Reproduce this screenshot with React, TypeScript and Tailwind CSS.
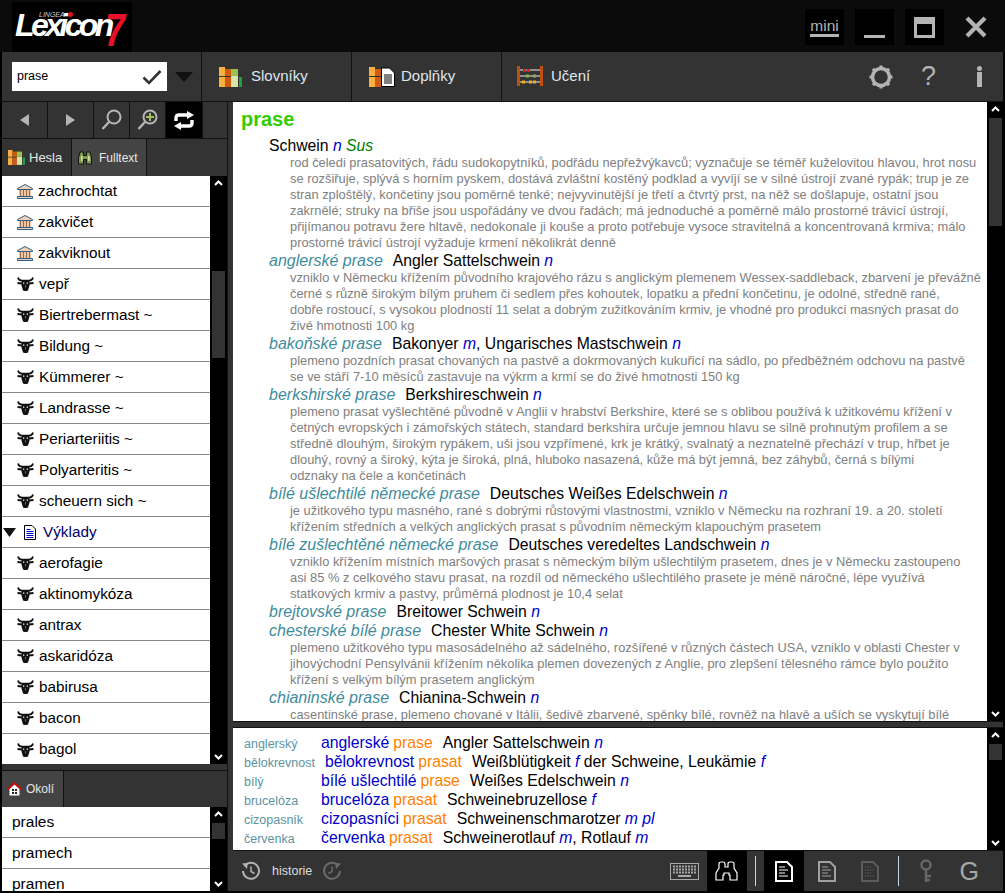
import * as React from "react";

// =============================================================================
// Data
// =============================================================================

type Kind = "bank" | "bull";

const LIST: Array<{ label: string; icon: Kind | "folder" }> = [
  { label: "zachrochtat", icon: "bank" },
  { label: "zakvičet", icon: "bank" },
  { label: "zakviknout", icon: "bank" },
  { label: "vepř", icon: "bull" },
  { label: "Biertrebermast ~", icon: "bull" },
  { label: "Bildung ~", icon: "bull" },
  { label: "Kümmerer ~", icon: "bull" },
  { label: "Landrasse ~", icon: "bull" },
  { label: "Periarteriitis ~", icon: "bull" },
  { label: "Polyarteritis ~", icon: "bull" },
  { label: "scheuern sich ~", icon: "bull" },
  { label: "Výklady", icon: "folder" },
  { label: "aerofagie", icon: "bull" },
  { label: "aktinomykóza", icon: "bull" },
  { label: "antrax", icon: "bull" },
  { label: "askaridóza", icon: "bull" },
  { label: "babirusa", icon: "bull" },
  { label: "bacon", icon: "bull" },
  { label: "bagol", icon: "bull" },
];

const ENTRIES: Array<{ term: string; trans: Array<[string, string?]>; lines: string[] }> = [
  {
    term: "anglerské prase",
    trans: [["Angler Sattelschwein", "n"]],
    lines: [
      "vzniklo v Německu křížením původního krajového rázu s anglickým plemenem Wessex-saddleback, zbarvení je převážně",
      "černé s různě širokým bílým pruhem či sedlem přes kohoutek, lopatku a přední končetinu, je odolné, středně rané,",
      "dobře rostoucí, s vysokou plodností 11 selat a dobrým zužitkováním krmiv, je vhodné pro produkci masných prasat do",
      "živé hmotnosti 100 kg",
    ],
  },
  {
    term: "bakoňské prase",
    trans: [["Bakonyer", "m"], [", Ungarisches Mastschwein", "n"]],
    lines: [
      "plemeno pozdních prasat chovaných na pastvě a dokrmovaných kukuřicí na sádlo, po předběžném odchovu na pastvě",
      "se ve stáří 7-10 měsíců zastavuje na výkrm a krmí se do živé hmotnosti 150 kg",
    ],
  },
  {
    term: "berkshirské prase",
    trans: [["Berkshireschwein", "n"]],
    lines: [
      "plemeno prasat vyšlechtěné původně v Anglii v hrabství Berkshire, které se s oblibou používá k užitkovému křížení v",
      "četných evropských i zámořských státech, standard berkshira určuje jemnou hlavu se silně prohnutým profilem a se",
      "středně dlouhým, širokým rypákem, uši jsou vzpřímené, krk je krátký, svalnatý a neznatelně přechází v trup, hřbet je",
      "dlouhý, rovný a široký, kýta je široká, plná, hluboko nasazená, kůže má být jemná, bez záhybů, černá s bílými",
      "odznaky na čele a končetinách",
    ],
  },
  {
    term: "bílé ušlechtilé německé prase",
    trans: [["Deutsches Weißes Edelschwein", "n"]],
    lines: [
      "je užitkového typu masného, rané s dobrými růstovými vlastnostmi, vzniklo v Německu na rozhraní 19. a 20. století",
      "křížením středních a velkých anglických prasat s původním německým klapouchým prasetem",
    ],
  },
  {
    term: "bílé zušlechtěné německé prase",
    trans: [["Deutsches veredeltes Landschwein", "n"]],
    lines: [
      "vzniklo křížením místních maršových prasat s německým bílým ušlechtilým prasetem, dnes je v Německu zastoupeno",
      "asi 85 % z celkového stavu prasat, na rozdíl od německého ušlechtilého prasete je méně náročné, lépe využívá",
      "statkových krmiv a pastvy, průměrná plodnost je 10,4 selat",
    ],
  },
  { term: "brejtovské prase", trans: [["Breitower Schwein", "n"]], lines: [] },
  {
    term: "chesterské bílé prase",
    trans: [["Chester White Schwein", "n"]],
    lines: [
      "plemeno užitkového typu masosádelného až sádelného, rozšířené v různých částech USA, vzniklo v oblasti Chester v",
      "jihovýchodní Pensylvánii křížením několika plemen dovezených z Anglie, pro zlepšení tělesného rámce bylo použito",
      "křížení s velkým bílým prasetem anglickým",
    ],
  },
  {
    term: "chianinské prase",
    trans: [["Chianina-Schwein", "n"]],
    lines: ["casentinské prase, plemeno chované v Itálii, šedivě zbarvené, spěnky bílé, rovněž na hlavě a uších se vyskytují bílé"],
  },
];

const RELATED: Array<{ label: string; term: string; pig: string; trans: Array<[string, string?]> }> = [
  { label: "anglerský", term: "anglerské", pig: "prase", trans: [["Angler Sattelschwein", "n"]] },
  { label: "bělokrevnost", term: "bělokrevnost", pig: "prasat", trans: [["Weißblütigkeit", "f"], [" der Schweine, Leukämie", "f"]] },
  { label: "bílý", term: "bílé ušlechtilé", pig: "prase", trans: [["Weißes Edelschwein", "n"]] },
  { label: "brucelóza", term: "brucelóza", pig: "prasat", trans: [["Schweinebruzellose", "f"]] },
  { label: "cizopasník", term: "cizopasníci", pig: "prasat", trans: [["Schweinenschmarotzer", "m pl"]] },
  { label: "červenka", term: "červenka", pig: "prasat", trans: [["Schweinerotlauf", "m"], [", Rotlauf", "m"]] },
  { label: "čtvrť", term: "čtvrtě", pig: "prasat", trans: [["Schweinehälfte", "f"]] },
];

// =============================================================================
// Icons
// =============================================================================

function Bull() {
  return (
    <svg width="17" height="14" viewBox="0 0 17 14" className="shrink-0">
      <path d="M1 .5Q1.500 3.500 5 3.500H12Q15.500 3.500 16 .5" fill="none" stroke="#111" strokeWidth="1.700" />
      <path d="M.5 6 5 6.500M16.500 6 12 6.500" stroke="#111" strokeWidth="1.800" />
      <path d="M4.500 4h8v4.500L11 13.500 9.500 14h-2L6 13.500 4.500 8.500z" fill="#111" />
      <path d="M6 5.500h1.300v1.300H6zM9.700 5.500H11v1.300H9.700z" fill="#fff" />
      <path d="M8 8h1v2.500H8z" fill="#666" />
    </svg>
  );
}

function Bank() {
  return (
    <svg width="16" height="15" viewBox="0 0 16 15" className="shrink-0">
      <path d="M8 .5 15.500 4.500V5.500H.5V4.500z" fill="#f3d3b5" stroke="#2c5c8c" />
      <path d="M2 6h12v6H2z" fill="#f3d3b5" />
      <path d="M3.500 6v6M6.500 6v6M9.500 6v6M12.500 6v6" stroke="#a8683c" strokeWidth="1.200" />
      <path d="M.5 12.500h15v2H.5z" fill="#f3d3b5" stroke="#2c5c8c" />
    </svg>
  );
}

function DocBlue() {
  return (
    <svg width="12" height="15" viewBox="0 0 12 15" className="shrink-0">
      <path d="M.5.5h7.500l3.500 3.500v10.500H.5z" fill="#fff" stroke="#000" />
      <path d="M2.500 4.500h4M2.500 6.500h7M2.500 8.500h7M2.500 10.500h7M2.500 12.500h7" stroke="#0000d0" />
    </svg>
  );
}

function Books({ small }: { small?: boolean }) {
  const s = small ? 17 : 23;
  return (
    <svg width={s} height={small ? 15 : 20} viewBox="0 0 23 20" className="shrink-0">
      <path d="M0 0h6v9H0zM0 10h6v10H0z" fill="#f8b040" />
      <path d="M6 2h6v7H6zM6 10h6v10H6z" fill="#d05a10" />
      <path d="M12 2h7v7h-7z" fill="#9cc050" />
      <path d="M12 9h7v11h-7z" fill="#d8e4a8" />
      <path d="M20 10h3v10h-3z" fill="#20a040" />
    </svg>
  );
}

function BooksDoc() {
  return (
    <svg width="26" height="20" viewBox="0 0 26 20" className="shrink-0">
      <path d="M0 0h6v9H0zM0 10h6v10H0z" fill="#f8b040" />
      <path d="M6 2h6v7H6zM6 10h6v10H6z" fill="#d05a10" />
      <path d="M12.500 1h8l5 5v13.500h-13z" fill="#fff" stroke="#000" />
      <path d="M15 8h8M15 10h8M15 12h8M15 14h8M15 16h8" stroke="#000" />
    </svg>
  );
}

function Abacus() {
  return (
    <svg width="26" height="21" viewBox="0 0 26 21" className="shrink-0">
      <path d="M0 0h3v20H0zM23 0h3v20h-3z" fill="#c05010" />
      <path d="M3 4h20M3 10h20M3 16h20" stroke="#eee" />
      <path d="M6 3h3v3H6zM10 3h3v3h-3z" fill="#e02020" />
      <path d="M9 8.500h3v3H9zM16 8.500h3v3h-3z" fill="#90b050" />
      <path d="M5 14.500h3v3H5zM12 14.500h3v3h-3zM16 14.500h3v3h-3z" fill="#f0b020" />
    </svg>
  );
}

function Binoculars({ white }: { white?: boolean }) {
  if (white) {
    return (
      <svg width="23" height="22" viewBox="0 0 23 22" fill="none" stroke="#fff" strokeWidth="1.200">
        <path d="M4 8V4q0-2 2-2h2q2 0 2 2v3h3V4q0-2 2-2h2q2 0 2 2v4l3 5v7h-7v-5h-1v-2H9v2H8v5H1v-7z" />
      </svg>
    );
  }
  return (
    <svg width="14" height="15" viewBox="0 0 14 15" className="shrink-0">
      <path d="M2 2h3.500v3.500h3V2H12l1.500 6v6H8.500V9.500h-3V14H.5V8z" fill="#7d9a4a" stroke="#111" />
      <path d="M3 6h1.500v5H3zM10 6h1.500v5H10z" fill="#d6e2a8" />
    </svg>
  );
}

function House() {
  return (
    <svg width="15" height="14" viewBox="0 0 15 14" className="shrink-0">
      <path d="M2.500 7v6.500h10V7L7.500 2.500z" fill="#fff" />
      <path d="M.5 7.500 7.500 1l7 6.500" fill="none" stroke="#e00000" strokeWidth="1.600" />
      <path d="M5 7h2v2H5zM8 7h2v2H8zM5 10h2v2H5zM8 10h2v2H8z" fill="#222" />
    </svg>
  );
}

function Magnifier({ plus }: { plus?: boolean }) {
  return (
    <svg width="21" height="22" viewBox="0 0 21 22" fill="none">
      <circle cx="13" cy="8" r="6.500" stroke="#b8b8b8" strokeWidth="2" />
      {plus && <path d="M13 4v8M9 8h8" stroke="#a0c060" strokeWidth="2" />}
      <path d="M8 13 1.500 20" stroke="#b8b8b8" strokeWidth="2.400" />
    </svg>
  );
}

function History({ dim, flip }: { dim?: boolean; flip?: boolean }) {
  const c = dim ? "#6a6a6a" : "#b4b4b4";
  return (
    <svg width="20" height="20" viewBox="0 0 20 20" fill="none" className={flip ? "-scale-x-100" : ""}>
      <path d="M4 4.500A8 8 0 1 1 2 10" stroke={c} strokeWidth="2" />
      <path d="M1 2.500 6.800 2 6 8z" fill={c} />
      <path d="M10 5.500V10.500L13.500 12.500" stroke={c} strokeWidth="1.500" />
    </svg>
  );
}

function DocOutline({ shade, inner, dotted }: { shade: string; inner: string; dotted?: boolean }) {
  return (
    <svg width="18" height="21" viewBox="0 0 18 21" fill="none">
      <path d="M1 1h11l5 5v14H1z" stroke={shade} strokeWidth="2" />
      <path d="M4 6h6M4 9h9M4 12h6M4 15h9" stroke={inner} strokeDasharray={dotted ? "1.500 1" : undefined} />
    </svg>
  );
}

function Gear() {
  return (
    <svg width="26" height="26" viewBox="0 0 26 26" fill="none">
      <circle cx="13" cy="13" r="8.500" stroke="#b4b4b4" strokeWidth="3.500" />
      <path
        d="M13 1.500v3M13 21.500v3M1.500 13h3M21.500 13h3M4.900 4.900l2.100 2.100M19 19l2.100 2.100M4.900 21.100 7 19M19 7l2.100-2.100"
        stroke="#b4b4b4"
        strokeWidth="3.200"
      />
    </svg>
  );
}

function Arrow({ down }: { down?: boolean }) {
  return (
    <svg width="9" height="6" viewBox="0 0 9 6" fill="none" className={down ? "rotate-180" : ""}>
      <path d="M1 5l3.500-3.500L8 5" stroke="#fff" strokeWidth="2" />
    </svg>
  );
}

// =============================================================================
// Parts
// =============================================================================

function Scrollbar({ top, thumb, className }: { top: number; thumb: number; className: string }) {
  return (
    <div className={`flex shrink-0 flex-col items-center bg-black ${className}`}>
      <div className="flex h-[14px] shrink-0 items-center justify-center">
        <Arrow />
      </div>
      <div style={{ height: top }} className="shrink-0" />
      <div style={{ height: thumb }} className="w-[13px] shrink-0 bg-[#333]" />
      <div className="flex-1" />
      <div className="flex h-[14px] shrink-0 items-center justify-center">
        <Arrow down />
      </div>
    </div>
  );
}

function Trans({ parts }: { parts: Array<[string, string?]> }) {
  return (
    <>
      {parts.map(([text, gender], i) => (
        <React.Fragment key={i}>
          {text}
          {gender && <i className="text-[#0000c8]"> {gender}</i>}
        </React.Fragment>
      ))}
    </>
  );
}

function WinButton({ children }: { children: React.ReactNode }) {
  return <div className="flex h-9 w-[39px] items-center justify-center bg-black">{children}</div>;
}

function NavItem({ icon, label, gap, inset }: { icon: React.ReactNode; label: string; gap: string; inset: string }) {
  return (
    <div className={`flex h-full w-[150px] items-center border-l border-[#111] text-[15px] text-[#dfe6ee] ${inset} ${gap}`}>
      {icon}
      <span>{label}</span>
    </div>
  );
}

// =============================================================================
// App
// =============================================================================

export default function App() {
  return (
    <div className="flex h-[893px] w-[1005px] flex-col overflow-hidden bg-black font-['Liberation_Sans',Arial,sans-serif]">
      {/* Title bar */}
      <div className="flex h-[52px] shrink-0 items-center bg-[#0b0b0b] pl-3">
        {/* Logo */}
        <div className="relative h-[50px] w-[120px] self-end overflow-hidden bg-black leading-none">
          <span className="absolute top-[7px] left-[3px] text-[32px] font-bold tracking-[-3.600px] text-white italic">Lexicon</span>
          <span className="absolute top-[5px] left-[93px] origin-left scale-x-[0.78] text-[46px] font-bold text-[#e8102a] italic">7</span>
          <span className="absolute top-[9px] left-[27px] flex items-center gap-[2px] text-[7px] text-[#ccc] italic">
            LINGEA
            <span className="ml-[1px] size-[5px] rounded-full bg-[#e01020]" />
          </span>
        </div>
        <div className="mt-[2px] ml-auto flex items-center gap-[11px] pr-[8px]">
          <WinButton>
            <span className="border-b-[3px] border-[#b4b4b4] text-[15.500px] leading-[17px] text-[#b4b4b4]">mini</span>
          </WinButton>
          <WinButton>
            <span className="mt-[19px] h-[3px] w-[21px] bg-[#b4b4b4]" />
          </WinButton>
          <WinButton>
            <span className="h-[21px] w-[21px] border-[3px] border-t-[7px] border-[#b4b4b4]" />
          </WinButton>
          <div className="flex w-[42px] justify-center">
            <svg width="22" height="22" viewBox="0 0 22 22">
              <path d="M2 2 20 20M20 2 2 20" stroke="#b4b4b4" strokeWidth="4.200" />
            </svg>
          </div>
        </div>
      </div>

      {/* Main toolbar */}
      <div className="mx-[2px] flex h-[49px] shrink-0 items-center bg-[#333]">
        <div className="flex w-[199px] items-center pl-[10px]">
          <div className="flex h-[29px] w-[155px] items-center justify-between bg-white px-[5px] text-[12.500px] text-black">
            prase
            <svg width="20" height="16" viewBox="0 0 20 16" fill="none">
              <path d="M1.500 8.500 7 14 18.500 2" stroke="#333" strokeWidth="2.600" />
            </svg>
          </div>
          <svg width="18" height="10" viewBox="0 0 18 10" className="ml-2">
            <path d="M0 0h18L9 10z" fill="#111" />
          </svg>
        </div>
        <NavItem icon={<Books />} label="Slovníky" gap="gap-[9px]" inset="pl-[17px]" />
        <NavItem icon={<BooksDoc />} label="Doplňky" gap="gap-[6px]" inset="pl-[17px]" />
        <NavItem icon={<Abacus />} label="Učení" gap="gap-[8px]" inset="pl-[15px]" />
        <div className="ml-auto flex items-center pr-[21px]">
          <Gear />
          <span className="ml-[27px] text-[27px] leading-none text-[#b4b4b4]">?</span>
          <div className="ml-[41px] flex flex-col items-center gap-[1px]">
            <span className="size-[5px] rounded-full bg-[#b4b4b4]" />
            <span className="h-[15px] w-[5px] bg-[#b4b4b4]" />
          </div>
        </div>
      </div>

      <div className="flex h-[790px] shrink-0 border-t border-[#111] px-[2px]">
        {/* Left column */}
        <div className="flex w-[225px] shrink-0 flex-col bg-[#333]">
          <div className="flex h-[37px] shrink-0 gap-px border-b border-[#111] bg-[#111]">
            <div className="flex w-[45px] items-center justify-center bg-[#333]">
              <svg width="9" height="12" viewBox="0 0 9 12"><path d="M9 0v12L0 6z" fill="#b4b4b4" /></svg>
            </div>
            <div className="flex w-[45px] items-center justify-center bg-[#333]">
              <svg width="9" height="12" viewBox="0 0 9 12"><path d="M0 0v12l9-6z" fill="#b4b4b4" /></svg>
            </div>
            <div className="flex w-[35px] items-center justify-center bg-[#333]"><Magnifier /></div>
            <div className="flex w-[35px] items-center justify-center bg-[#333]"><Magnifier plus /></div>
            <div className="flex w-[36px] items-center justify-center bg-black">
              <svg width="20" height="19" viewBox="0 0 20 19" fill="none">
                <path d="M2 10V7q0-3 3-3h9" stroke="#fff" strokeWidth="3.400" />
                <path d="M13 0l7 4-7 4z" fill="#fff" />
                <path d="M18 9v3q0 3-3 3H6" stroke="#fff" strokeWidth="3.400" />
                <path d="M7 11l-7 4 7 4z" fill="#fff" />
              </svg>
            </div>
            <div className="flex-1 bg-[#333]" />
          </div>
          <div className="flex h-[37px] shrink-0 text-[#e6e6e6]">
            <div className="flex w-[70px] items-center gap-[4px] border-r border-[#111] pl-[6px] text-[13px]">
              <Books small />
              Hesla
            </div>
            <div className="flex w-[75px] items-center gap-[7px] border-r border-[#111] bg-[#444] pl-[6px] text-[12px]">
              <Binoculars />
              Fulltext
            </div>
          </div>
          <div className="flex h-[588px] shrink-0">
            <div className="w-[208px] shrink-0 bg-white text-[15.300px] text-black">
              {LIST.map((row) =>
                row.icon === "folder" ? (
                  <div key={row.label} className="flex h-[31px] items-center border-b border-[#888]">
                    <svg width="13" height="9" viewBox="0 0 13 9" className="mr-[8px] ml-[1px]">
                      <path d="M0 0h13L6.500 9z" fill="#111" />
                    </svg>
                    <DocBlue />
                    <span className="ml-[7px] text-[#00006a]">{row.label}</span>
                  </div>
                ) : (
                  <div key={row.label} className="flex h-[31px] items-center gap-[5px] border-b border-[#888] pl-[15px] last:border-b-0">
                    {row.icon === "bank" ? <Bank /> : <Bull />}
                    <span>{row.label}</span>
                  </div>
                ),
              )}
            </div>
            <Scrollbar top={81} thumb={87} className="w-[17px]" />
          </div>
          <div className="h-[7px] shrink-0 border-b border-[#111]" />
          <div className="flex h-[36px] shrink-0 text-[12px] text-[#e6e6e6]">
            <div className="flex w-[62px] items-center gap-[4px] border-r border-[#111] bg-[#444] pl-[5px]">
              <House />
              Okolí
            </div>
          </div>
          <div className="flex min-h-0 flex-1">
            <div className="w-[208px] shrink-0 overflow-hidden bg-white text-[15.500px] text-black">
              {["prales", "pramech", "pramen"].map((w) => (
                <div key={w} className="flex h-[31px] items-center border-b border-[#888] pl-[10px]">
                  {w}
                </div>
              ))}
            </div>
            <Scrollbar top={2} thumb={16} className="w-[17px]" />
          </div>
        </div>

        {/* Right column */}
        <div className="flex min-w-0 flex-1 flex-col border-l border-[#111] bg-[#333] pl-[5px]">
          <div className="flex h-[620px] shrink-0 border-b border-[#111]">
            <div className="w-[754px] shrink-0 overflow-hidden bg-white pt-[6px] pl-[8px] whitespace-nowrap">
              <div className="h-[29px] text-[20px] leading-[22px] font-bold text-[#33cc00]">prase</div>
              <div className="pl-[28px]">
                <div className="h-[18px] text-[15.750px] leading-[18px] text-black">
                  Schwein <i className="text-[#0000c8]">n</i> <i className="text-[#008000]">Sus</i>
                </div>
                <div className="pl-[21px] text-[12.870px] leading-[16px] text-[#808080]">
                  <div>rod čeledi prasatovitých, řádu sudokopytníků, podřádu nepřežvýkavců; vyznačuje se téměř kuželovitou hlavou, hrot nosu</div>
                  <div>se rozšiřuje, splývá s horním pyskem, dostává zvláštní kostěný podklad a vyvíjí se v silné ústrojí zvané rypák; trup je ze</div>
                  <div>stran zploštělý, končetiny jsou poměrně tenké; nejvyvinutější je třetí a čtvrtý prst, na něž se došlapuje, ostatní jsou</div>
                  <div>zakrnělé; struky na břiše jsou uspořádány ve dvou řadách; má jednoduché a poměrně málo prostorné trávicí ústrojí,</div>
                  <div>přijímanou potravu žere hltavě, nedokonale ji kouše a proto potřebuje vysoce stravitelná a koncentrovaná krmiva; málo</div>
                  <div>prostorné trávicí ústrojí vyžaduje krmení několikrát denně</div>
                </div>
                {ENTRIES.map((e) => (
                  <div key={e.term}>
                    <div className="h-[19px] text-[15.750px] leading-[19px] text-black">
                      <i className="mr-[10px] text-[16px] text-[#3f8c9c]">{e.term}</i>
                      <Trans parts={e.trans} />
                    </div>
                    <div className="pl-[21px] text-[12.870px] leading-[16px] text-[#808080]">
                      {e.lines.map((l) => (
                        <div key={l}>{l}</div>
                      ))}
                    </div>
                  </div>
                ))}
              </div>
            </div>
            <Scrollbar top={2} thumb={108} className="w-[16px]" />
          </div>
          <div className="h-[6px] shrink-0 border-b border-[#111]" />
          <div className="flex h-[123px] shrink-0 border-b border-[#111]">
            <div className="w-[754px] shrink-0 overflow-hidden bg-white pt-[5px] pl-[11px] whitespace-nowrap">
              {RELATED.map((r) => (
                <div key={r.label} className="flex h-[19px] items-baseline text-[15.750px] leading-[19px] text-black">
                  <span className="min-w-[77px] pr-[10px] text-[12.500px] text-[#5c93a3]">{r.label}</span>
                  <span className="text-[#0000c8]">{r.term}</span>
                  <span className="mr-[10px] ml-[4px] text-[#ff8000]">{r.pig}</span>
                  <span><Trans parts={r.trans} /></span>
                </div>
              ))}
            </div>
            <Scrollbar top={2} thumb={16} className="w-[16px]" />
          </div>

          {/* Bottom toolbar */}
          <div className="flex min-h-0 flex-1 items-center pl-[8px]">
            <History />
            <span className="ml-[11px] text-[12.500px] text-[#dcdcdc]">historie</span>
            <span className="ml-[10px]"><History dim flip /></span>
            <div className="ml-auto flex h-full items-center pr-[24px]">
              <svg width="29" height="17" viewBox="0 0 29 17" fill="none">
                <rect x=".5" y=".5" width="28" height="16" stroke="#a8a8a8" />
                <path d="M3 3.500h23M3 6.500h23M3 9.500h23" stroke="#a8a8a8" strokeWidth="2" strokeDasharray="2 1" />
                <path d="M8 13h13" stroke="#a8a8a8" strokeWidth="2" />
              </svg>
              <div className="ml-[8px] flex h-[40px] w-[40px] items-center justify-center bg-black">
                <Binoculars white />
              </div>
              <span className="mx-[8px] h-[30px] w-px bg-[#c4d4e4]" />
              <div className="flex h-[40px] w-[40px] items-center justify-center bg-black">
                <DocOutline shade="#fff" inner="#fff" />
              </div>
              <div className="ml-[14px]"><DocOutline shade="#a0a0a0" inner="#a0a0a0" /></div>
              <div className="ml-[25px]"><DocOutline shade="#5c5c5c" inner="#5c5c5c" dotted /></div>
              <span className="mr-[20px] ml-[19px] h-[30px] w-px bg-[#c4d4e4]" />
              <svg width="14" height="24" viewBox="0 0 14 24" fill="none">
                <circle cx="7" cy="6" r="4.500" stroke="#666" strokeWidth="2.500" />
                <path d="M7 10v13M7 17h5M7 21h4" stroke="#666" strokeWidth="2.500" />
              </svg>
              <span className="ml-[27px] text-[25px] leading-none text-[#a8a8a8]">G</span>
            </div>
          </div>
        </div>
      </div>
    </div>
  );
}
